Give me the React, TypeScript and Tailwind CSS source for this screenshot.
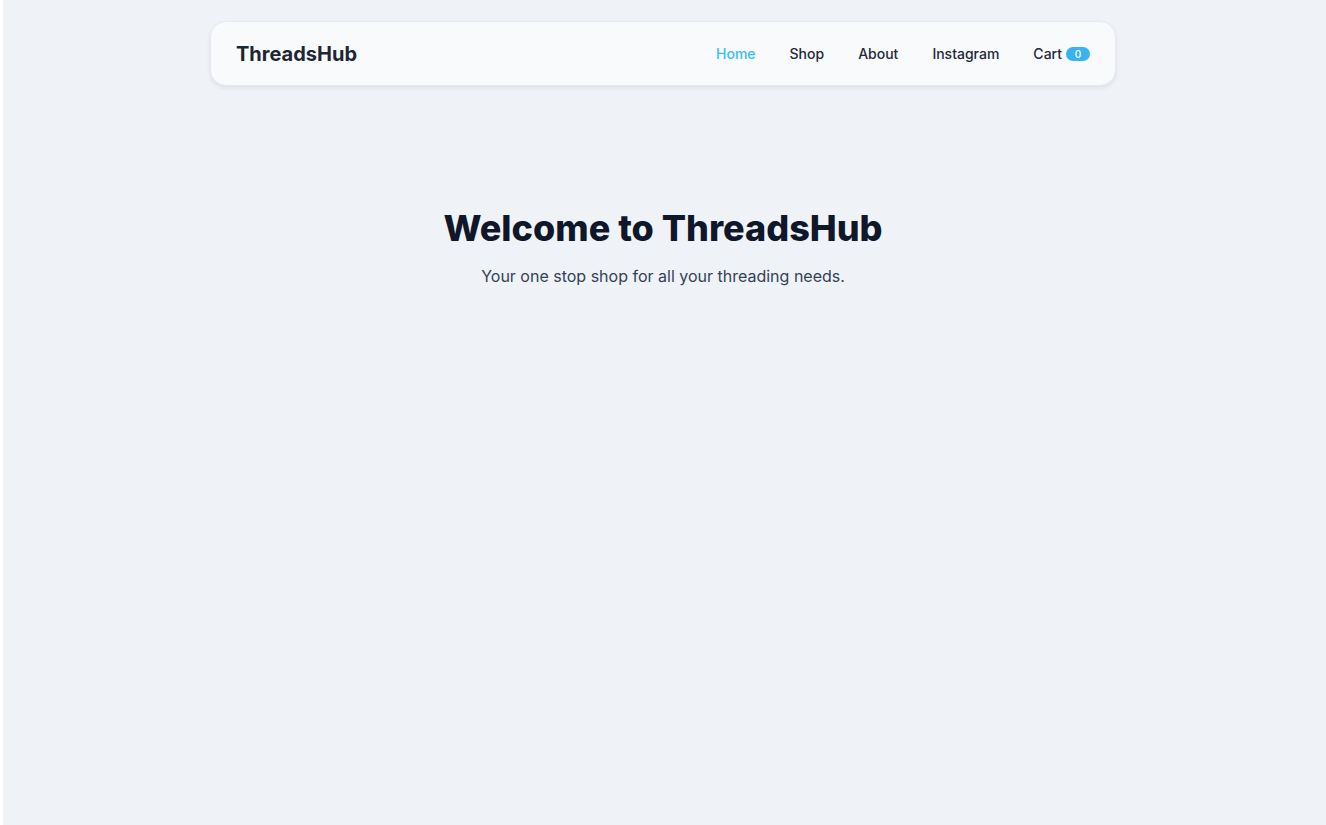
const links = ["Home", "Shop", "About", "Instagram"];

export default function App() {
  return (
    <div
      className="min-h-screen bg-[#eff3f8] border-l-[3px] border-white pr-[3px]"
      style={{ fontFamily: "Inter, 'Noto Sans', sans-serif" }}
    >
      {/* Navbar */}
      <div className="pt-[21px]">
        <nav className="mx-auto w-[906px] h-[65px] flex items-center justify-between px-[25px] bg-[#f8fafc] rounded-2xl border border-[#e6eaf0] shadow-[0_2px_4px_rgba(15,23,42,0.08)]">
          <span className="text-xl font-bold text-[#1e2533]">ThreadsHub</span>
          <div className="flex items-center gap-[34px] text-sm font-medium text-[#1f2937]">
            {links.map((l) => (
              <a
                key={l}
                href="#"
                className={l === "Home" ? "text-[#38bdf8]" : "text-[#1f2937]"}
              >
                {l}
              </a>
            ))}
            <a href="#" className="flex items-center gap-1">
              Cart
              <span className="inline-flex items-center justify-center w-6 h-[14px] rounded-full bg-[#38b2f0] text-white text-[10px] leading-none">
                0
              </span>
            </a>
          </div>
        </nav>
      </div>

      {/* Hero */}
      <section className="pt-[122px] text-center">
        <h1 className="text-4xl font-extrabold text-[#0f172a]">
          Welcome to ThreadsHub
        </h1>
        <p className="mt-4 text-base text-[#334155]">
          Your one stop shop for all your threading needs.
        </p>
      </section>
    </div>
  );
}
